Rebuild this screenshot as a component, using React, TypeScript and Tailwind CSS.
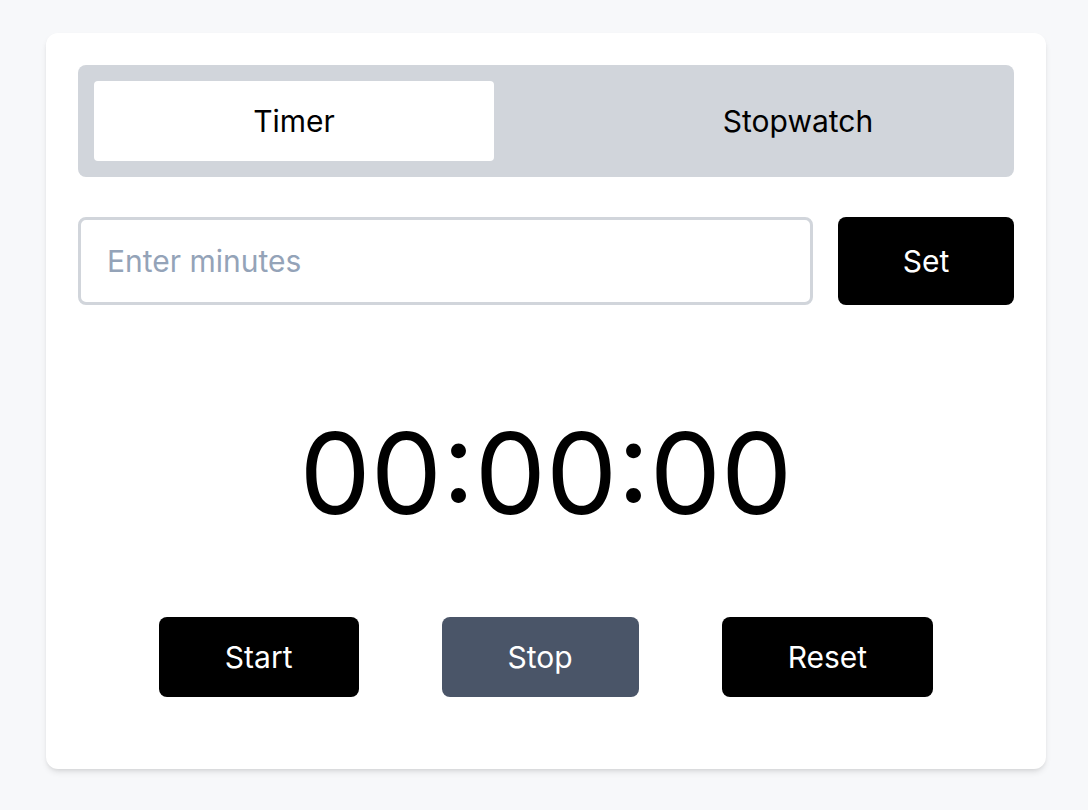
import { useState } from 'react';

export default function App() {
  const [mode, setMode] = useState<'timer' | 'stopwatch'>('timer');
  const [minutes, setMinutes] = useState('');

  return (
    <div className="min-h-screen bg-[#f7f8fa] pt-[33px] pl-[46px]" style={{ fontFamily: 'Inter, "Noto Sans", sans-serif' }}>
      <div className="w-[1000px] rounded-xl bg-white p-8 pb-[72px] shadow-md">
        <div className="flex justify-between rounded-lg bg-[#d1d5db] p-4">
          <button
            onClick={() => setMode('timer')}
            className={`h-20 w-[400px] rounded text-3xl text-black ${mode === 'timer' ? 'bg-white' : ''}`}
          >
            Timer
          </button>
          <button
            onClick={() => setMode('stopwatch')}
            className={`h-20 w-[400px] rounded text-3xl text-black ${mode === 'stopwatch' ? 'bg-white' : ''}`}
          >
            Stopwatch
          </button>
        </div>

        <div className="mt-10 flex gap-[25px]">
          <input
            value={minutes}
            onChange={(e) => setMinutes(e.target.value)}
            placeholder="Enter minutes"
            className="h-[88px] flex-1 rounded-lg border-[3px] border-[#d1d5db] px-[26px] text-3xl outline-none placeholder:text-[#94a3b8]"
          />
          <button className="h-[88px] w-[176px] rounded-lg bg-black text-3xl text-white">Set</button>
        </div>

        <div className="mt-[112px] text-center text-[113px] leading-none text-black">00:00:00</div>

        <div className="mt-[87px] flex justify-center gap-[83px]">
          <button className="h-20 rounded-lg bg-black px-[66px] text-3xl text-white">Start</button>
          <button className="h-20 rounded-lg bg-[#4a5568] px-[66px] text-3xl text-white">Stop</button>
          <button className="h-20 rounded-lg bg-black px-[66px] text-3xl text-white">Reset</button>
        </div>
      </div>
    </div>
  );
}
